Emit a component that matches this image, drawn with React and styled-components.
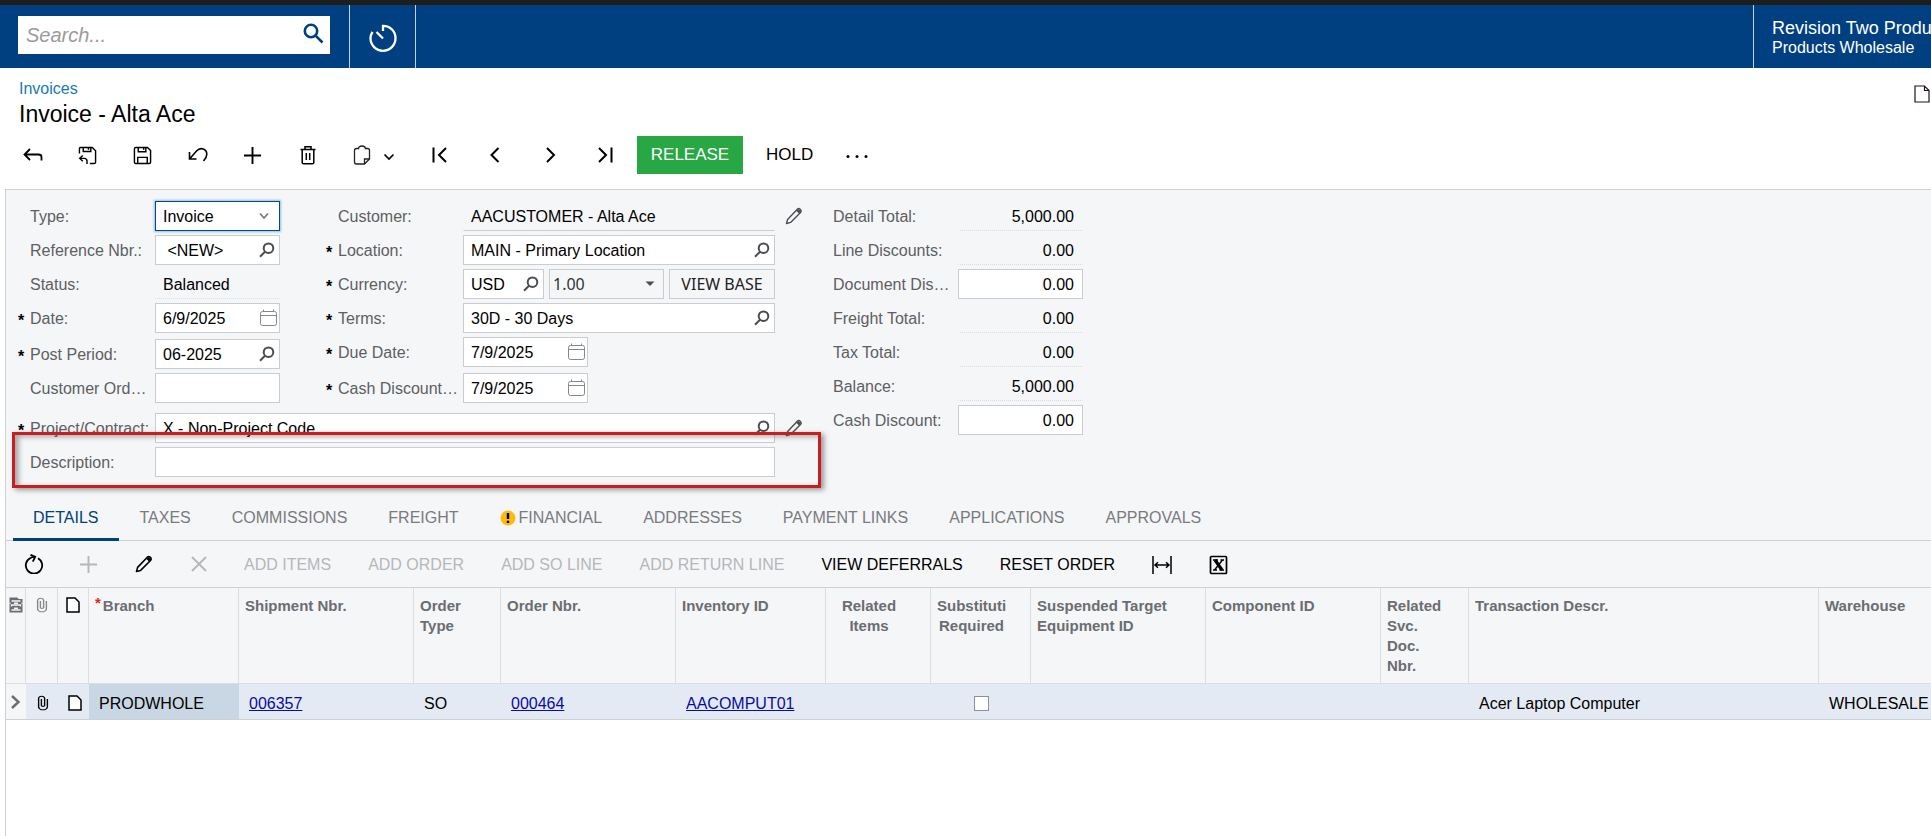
import React from "react";
import styled, { createGlobalStyle, css } from "styled-components";

const c = {
  navy: "#003f80",
  navyText: "#00427a",
  panel: "#f5f6f8",
  line: "#ced1d4",
  field: "#c9ccd0",
  label: "#5d5f62",
  muted: "#797b7e",
  disabled: "#b5b7ba",
  icon: "#4a4c50",
  row: "#e4eaf3",
  cell: "#c9d6e3",
  red: "#c81e20",
};

const Global = createGlobalStyle`
  *, *::before, *::after { box-sizing: border-box; }
  body {
    margin: 0;
    background: #fff;
    color: #000;
    font: 16px/20px "Liberation Sans", Arial, sans-serif;
    overflow-x: hidden;
  }
  button, input, select { font: inherit; color: inherit; margin: 0; }
  button { cursor: pointer; }
  svg { display: block; flex: none; }
`;

const Page = styled.div`
  display: flex;
  flex-direction: column;
  min-height: 100vh;
`;

const TopBar = styled.header`
  display: flex;
  height: 68px;
  flex: none;
  border-top: 5px solid #1e1e1e;
  background: ${c.navy};
  color: #fff;
`;

const Search = styled.form`
  display: flex;
  align-items: center;
  width: 312px;
  height: 38px;
  margin: 11px 19px 0 18px;
  background: #fff;
`;

const SearchInput = styled.input`
  flex: 1;
  min-width: 0;
  height: 38px;
  padding: 0 8px;
  border: 0;
  outline: 0;
  background: none;
  font-size: 20px;
  font-style: italic;
  color: #000;
  &::placeholder { color: #9b9b9b; opacity: 1; }
`;

const SearchButton = styled.button`
  padding: 0 6px 2px;
  border: 0;
  background: none;
`;

const TimerButton = styled.button`
  display: flex;
  align-items: center;
  justify-content: center;
  width: 67px;
  padding: 2px 0 0;
  border: solid #c4d3e2;
  border-width: 0 1px;
  background: none;
`;

const Tenant = styled.div`
  width: 178px;
  margin-left: auto;
  padding: 13px 0 0 18px;
  border-left: 1px solid #c4d3e2;
  overflow: hidden;
  white-space: nowrap;
`;

const Company = styled.div`
  font-size: 18px;
  line-height: 20px;
`;

const TitleBar = styled.div`
  display: flex;
  justify-content: space-between;
  padding: 11px 1px 0 19px;
`;

const Crumb = styled.a`
  display: block;
  color: #157ab5;
  text-decoration: none;
`;

const Title = styled.h1`
  margin: 1px 0 0;
  font-size: 23px;
  line-height: 28px;
  font-weight: 400;
`;

const PlainButton = styled.button`
  display: flex;
  align-items: center;
  justify-content: center;
  flex: none;
  padding: 0;
  border: 0;
  background: none;
`;

const NoteButton = styled(PlainButton)`
  align-self: flex-start;
  margin-top: 6px;
`;

const ActionBar = styled.div`
  display: flex;
  padding: 8px 5px 15px;
`;

const IconAction = styled(PlainButton)`
  width: ${(p) => (p.$menu ? "77px" : "55px")};
  height: 38px;
  gap: 12px;
`;

const TextAction = styled(PlainButton)`
  height: 38px;
  padding: 0 23px;
  font-size: 17px;
  ${(p) =>
    p.$primary &&
    css`
      width: 106px;
      margin-left: 5px;
      padding: 0;
      background: #28a745;
      color: #fff;
    `}
`;

const Panel = styled.main`
  display: flex;
  flex-direction: column;
  flex: 1;
  margin-left: 5px;
  border: solid ${c.line};
  border-width: 1px 0 0 1px;
`;

const Form = styled.form`
  display: flex;
  padding: 11px 12px 16px;
  background: ${c.panel};
`;

const Stack = styled.div`
  display: flex;
  flex-direction: column;
  gap: ${(p) => p.$gap || 4}px;
`;

const Pair = styled.div`
  display: flex;
  gap: 46px;
`;

const Row = styled.div`
  display: flex;
  align-items: center;
  height: 30px;
`;

const Star = styled.span`
  width: 12px;
  flex: none;
  padding-top: 6px;
  font-weight: 700;
  line-height: 20px;
`;

const Label = styled.label`
  width: 121px;
  margin-right: 4px;
  padding-top: 1px;
  flex: none;
  overflow: hidden;
  white-space: nowrap;
  text-overflow: ellipsis;
  color: ${c.label};
`;

const sizes = { small: 81, rate: 115, normal: 125, wide: 312, full: 620 };

const Box = styled.div`
  position: relative;
  display: flex;
  align-items: center;
  flex: none;
  width: ${(p) => sizes[p.$size || "normal"]}px;
  height: 30px;
  border: 1px solid ${c.field};
  background: #fff;
  ${(p) =>
    p.$look === "focus" &&
    css`
      border-color: #0b4779;
      box-shadow: 0 0 2px 1px #8fc0ee;
    `}
  ${(p) =>
    p.$look === "gray" &&
    css`
      background: ${c.panel};
    `}
  ${(p) =>
    p.$look === "line" &&
    css`
      border-color: transparent transparent ${c.field};
      background: none;
    `}
  ${(p) =>
    p.$look === "dots" &&
    css`
      border-color: transparent;
      border-bottom: 1px dotted #d9dce0;
      background: none;
    `}
`;

const Input = styled.input`
  flex: 1;
  width: 0;
  height: 28px;
  padding: 1px 8px 0 7px;
  border: 0;
  outline: 0;
  background: none;
  text-align: ${(p) => (p.$right ? "right" : "left")};
`;

const Select = styled.select`
  width: 100%;
  height: 28px;
  padding: ${(p) => (p.$rate ? "0 3px" : "1px 7px 0")};
  border: 0;
  outline: 0;
  background: none;
  appearance: none;
  ${(p) =>
    p.$rate &&
    css`
      font-family: "Noto Sans", sans-serif;
      color: #333;
    `}
`;

const SelectArrow = styled.span`
  position: absolute;
  right: ${(p) => p.$inset}px;
  pointer-events: none;
`;

const FieldButton = styled(PlainButton)`
  width: ${(p) => (p.$date ? 20 : 24)}px;
  height: 28px;
`;

const EditButton = styled(PlainButton)`
  width: 46px;
  height: 30px;
  padding-right: 8px;
`;

const CurrencyGroup = styled.div`
  display: flex;
  gap: 5px;
`;

const ViewBase = styled(PlainButton)`
  width: 106px;
  height: 30px;
  border: 1px solid ${c.field};
  font-family: "Noto Sans", sans-serif;
  color: #222;
`;

const WideBlock = styled.div`
  position: relative;
`;

const Callout = styled.div`
  position: absolute;
  inset: 19px 0 -11px -6px;
  border: 3px solid ${c.red};
  box-shadow: 3px 2px 5px rgba(60, 60, 60, 0.5), inset 4px 2px 5px rgba(60, 60, 60, 0.4);
  pointer-events: none;
`;

const Tabs = styled.nav`
  display: flex;
  gap: 1px;
  height: 48px;
  padding-left: 7px;
  border-bottom: 1px solid ${c.line};
  background: ${c.panel};
`;

const Tab = styled.button`
  display: flex;
  align-items: center;
  gap: 3px;
  height: 48px;
  padding: 4px 20px 0;
  border: 0;
  border-bottom: 3px solid ${(p) => (p.$active ? c.navyText : "transparent")};
  background: none;
  color: ${(p) => (p.$active ? c.navyText : c.muted)};
  white-space: nowrap;
`;

const GridBar = styled.div`
  display: flex;
  align-items: center;
  height: 47px;
  border-bottom: 1px solid ${c.line};
  background: ${c.panel};
`;

const GridIcon = styled(PlainButton)`
  width: 55px;
  height: 40px;
`;

const GridTexts = styled.div`
  display: flex;
  gap: 1px;
`;

const GridAction = styled(PlainButton)`
  height: 40px;
  padding: 1px 18px 0;
  white-space: nowrap;
  &:disabled { color: ${c.disabled}; }
`;

const Table = styled.table`
  width: 100%;
  table-layout: fixed;
  border-collapse: separate;
  border-spacing: 0;
`;

const Th = styled.th`
  height: 96px;
  padding: ${(p) => (p.$icon ? "9px 0 0" : "8px 24px 0 6px")};
  border: solid #dcdee1;
  border-width: 0 1px 1px 0;
  background: ${c.panel};
  color: #6b6d70;
  font-size: 15px;
  text-align: ${(p) => (p.$center ? "center" : "left")};
  vertical-align: top;
  &:last-child { border-right: 0; }
  & > svg { margin: 0 auto; }
`;

const HeadText = styled.div`
  overflow: hidden;
`;

const Required = styled.sup`
  margin-right: 2px;
  color: #d9281e;
  font-size: 15px;
  line-height: 0;
  vertical-align: 3px;
`;

const Td = styled.td`
  height: 36px;
  padding: ${(p) => (p.$center ? "3px 0 0" : p.$icon ? "3px 0 0 2px" : "4px 0 0 10px")};
  border-bottom: 1px solid ${c.line};
  background: ${(p) => (p.$plain ? c.panel : p.$selected ? c.cell : c.row)};
  white-space: nowrap;
  overflow: hidden;
  & > svg { margin: 0 auto; }
`;

const CellLink = styled.a`
  color: #0a0aa8;
  text-decoration: underline;
`;

const Check = styled.input`
  display: block;
  appearance: none;
  width: 15px;
  height: 15px;
  margin: 0 auto;
  border: 1px solid #8e9099;
  background: #fff;
`;

const Svg = ({ w = 20, h = 20, s = 2, color = "#000", px, children }) => (
  <svg
    width={px || w}
    height={px || h}
    viewBox={`0 0 ${w} ${h}`}
    fill="none"
    stroke={color}
    strokeWidth={s}
    aria-hidden="true"
  >
    {children}
  </svg>
);

const Lens = () => (
  <Svg w={16} h={16} color={c.icon}>
    <circle cx="9.5" cy="6.2" r="4.8" />
    <path d="M6 9.7L1 14.7" />
  </Svg>
);
const Calendar = () => (
  <Svg w={18} h={18} s={1} color="#85878b">
    <rect x="0.5" y="2.5" width="16" height="14" rx="2" />
    <path d="M1 6.5H16M3.5 0.5V3M13.5 0.5V3" />
  </Svg>
);
const Pencil = ({ color = c.icon, s = 1.4 }) => (
  <Svg w={18} h={18} s={s} color={color}>
    <path d="M1.5 16.5L2.6 12.4L12.3 2.2Q13.8 0.9 15.4 2.4Q16.8 3.9 15.5 5.5L5.6 15.4Z" strokeLinejoin="round" />
    <path d="M12.4 3L15 5.4" strokeWidth="3" />
  </Svg>
);
const Clip = ({ color }) => (
  <svg width="12" height="16" viewBox="6 0 13 24" preserveAspectRatio="none" fill={color} aria-hidden="true">
    <path d="M16.5 6v11.5c0 2.21-1.79 4-4 4s-4-1.79-4-4V5c0-1.38 1.12-2.5 2.5-2.5s2.5 1.12 2.5 2.5v10.5c0 .55-.45 1-1 1s-1-.45-1-1V6H10v9.5c0 1.38 1.12 2.5 2.5 2.5s2.5-1.12 2.5-2.5V5c0-2.21-1.79-4-4-4S7 2.79 7 5v12.5c0 3.04 2.46 5.5 5.5 5.5s5.5-2.46 5.5-5.5V6h-1.5z" />
  </svg>
);
const Note = () => (
  <Svg w={14} h={16} s={1.5}>
    <path d="M1 1H9L13 5V15H1Z" fill="#fff" />
  </Svg>
);

const Lookup = ({ label }) => (
  <FieldButton type="button" aria-label={label}>
    <Lens />
  </FieldButton>
);

function Field({ id, label, required, value = "", size, look, icon, right, edit, readOnly }) {
  return (
    <Row>
      <Star>{required ? "*" : ""}</Star>
      <Label htmlFor={id}>{label}</Label>
      <Box $size={size} $look={look}>
        <Input id={id} defaultValue={value} $right={right} readOnly={readOnly} />
        {icon === "lens" && <Lookup label={`Select ${id}`} />}
        {icon === "date" && (
          <FieldButton type="button" $date aria-label={`Pick ${id}`}>
            <Calendar />
          </FieldButton>
        )}
      </Box>
      {edit && (
        <EditButton type="button" aria-label={`Edit ${id}`}>
          <Pencil />
        </EditButton>
      )}
    </Row>
  );
}

const totals = [
  ["detailTotal", "Detail Total:", "5,000.00"],
  ["lineDiscounts", "Line Discounts:", "0.00"],
  ["documentDiscounts", "Document Discounts:", "0.00", true],
  ["freightTotal", "Freight Total:", "0.00"],
  ["taxTotal", "Tax Total:", "0.00"],
  ["balance", "Balance:", "5,000.00"],
  ["cashDiscount", "Cash Discount:", "0.00", true],
];

const actions = [
  ["Back", <Svg s={1.8}><path d="M7 4L1.5 9.5L7 15M1.5 9.5H15.5Q18.5 9.5 18.5 12V15.5" /></Svg>],
  [
    "Save and close",
    <Svg s={1.5} px={19}>
      <path d="M1.5 8V2.5Q1.5 1.5 2.5 1.5H15L18.5 5V17Q18.5 18.5 17 18.5H12.5" />
      <path d="M5.5 2V5.8H13.5V2M11 2V4" />
      <path d="M5 10L1.8 13L5 16M2 13H6.5Q9.5 13 9.5 16V19" />
    </Svg>,
  ],
  [
    "Save",
    <Svg s={1.5} px={19}>
      <path d="M3 1.5H15.2L18.5 4.8V17Q18.5 18.5 17 18.5H3Q1.5 18.5 1.5 17V3Q1.5 1.5 3 1.5Z" />
      <path d="M5.5 2V6H13.5V2M11.2 2V4M5 18V12H15V18" />
    </Svg>,
  ],
  [
    "Undo",
    <Svg s={1.6}>
      <path d="M1.5 7V14H8.5M1.8 13.7L8.5 6Q11.5 2.7 15.3 4Q18.8 5.5 18.8 9.2Q18.8 12.5 15.5 16" />
    </Svg>,
  ],
  ["Add", <Svg px={19}><path d="M10 1V19M1 10H19" /></Svg>],
  [
    "Delete",
    <Svg s={1.5}>
      <path d="M2.5 4.5H17.5M7 4V1.8H13V4M4.2 4.5V17.5Q4.2 18.8 5.5 18.8H14.5Q15.8 18.8 15.8 17.5V4.5M8.3 8V15M11.7 8V15" />
    </Svg>,
  ],
  [
    "Clipboard",
    <>
      <Svg w={18} s={1.3} color="#222">
        <path d="M5.5 3.5H3.5Q1.5 3.5 1.5 5.5V17Q1.5 19 3.5 19H11.5L16.5 14V5.5Q16.5 3.5 14.5 3.5H12.5" />
        <path d="M5.5 4.2Q5.5 1 9 1Q12.5 1 12.5 4.2M11.5 19V14H16.5" />
      </Svg>
      <Svg w={12} h={12} s={1.7}><path d="M1.5 5.5L6 10L10.5 5.5" /></Svg>
    </>,
  ],
  ["First", <Svg><path d="M3.5 2.5V17.5M16 3L9 10L16 17" /></Svg>],
  ["Previous", <Svg><path d="M13.5 3L6.5 10L13.5 17" /></Svg>],
  ["Next", <Svg><path d="M7 3L14 10L7 17" /></Svg>],
  ["Last", <Svg><path d="M4 3L11 10L4 17M16.5 2.5V17.5" /></Svg>],
];

const tabs = [
  "DETAILS",
  "TAXES",
  "COMMISSIONS",
  "FREIGHT",
  "FINANCIAL",
  "ADDRESSES",
  "PAYMENT LINKS",
  "APPLICATIONS",
  "APPROVALS",
];

const gridIcons = [
  [
    "Refresh",
    <Svg s={1.8}>
      <path d="M14 4.2A8.2 8.2 0 1 1 6 4.2Q7.5 3 11 2.9" />
      <path d="M6.5 0.8L11.2 2.8L8.8 7.6" />
    </Svg>,
  ],
  ["Add row", <Svg color="#b4b6b9" px={19}><path d="M10 1V19M1 10H19" /></Svg>, true],
  ["Edit row", <Pencil color="#000" s={1.6} />],
  ["Delete row", <Svg color="#b4b6b9" s={1.8}><path d="M3 3L17 17M17 3L3 17" /></Svg>, true],
];

const gridActions = [
  ["ADD ITEMS", true],
  ["ADD ORDER", true],
  ["ADD SO LINE", true],
  ["ADD RETURN LINE", true],
  ["VIEW DEFERRALS", false],
  ["RESET ORDER", false],
];

const columns = [
  { w: 20 },
  { w: 32 },
  { w: 31 },
  { w: 150, text: "Branch", required: true },
  { w: 175, text: "Shipment Nbr." },
  { w: 87, text: "Order Type" },
  { w: 175, text: "Order Nbr." },
  { w: 150, text: "Inventory ID" },
  { w: 105, text: "Related Items", center: true },
  { w: 100, text: "Substitution Required", center: true },
  { w: 175, text: "Suspended Target Equipment ID" },
  { w: 175, text: "Component ID" },
  { w: 88, text: "Related Svc. Doc. Nbr." },
  { w: 350, text: "Transaction Descr." },
  { text: "Warehouse" },
];

const headIcons = [
  <Svg w={14} h={16} s={1.4} color={c.panel}>
    <path d="M0.5 0.5H8.5L9.5 2H13.5V15.5H0.5Z" fill="#6b6d70" stroke="none" />
    <path d="M2.5 4H11.5M2.5 9.5V8H11.5V9.5M2.5 13H11.5M0.5 6.3H1.5M12.5 6.3H13.5M5 6.3H9M5 11.3H9" />
  </Svg>,
  <Clip color="#85878a" />,
  <Note />,
];

export default function App() {
  return (
    <Page>
      <Global />
      <TopBar>
        <Search onSubmit={(e) => e.preventDefault()}>
          <SearchInput placeholder="Search..." aria-label="Search" />
          <SearchButton aria-label="Run search">
            <Svg w={22} h={22} s={2.6} color={c.navy}>
              <circle cx="9" cy="8" r="6.2" />
              <path d="M13.3 12.3L20.5 19.5" />
            </Svg>
          </SearchButton>
        </Search>
        <TimerButton aria-label="Recent">
          <Svg w={28} h={28} s={2.3} color="#fff">
            <path d="M14 7V1.8C21.5 1.8 26.5 7.5 26.5 14.3A12.5 12.5 0 0 1 1.5 14.3Q1.5 11 3.5 8M7.5 8L14 14.5" />
          </Svg>
        </TimerButton>
        <Tenant>
          <Company>Revision Two Products</Company>
          <div>Products Wholesale</div>
        </Tenant>
      </TopBar>

      <TitleBar>
        <div>
          <Crumb href="#invoices">Invoices</Crumb>
          <Title>Invoice - Alta Ace</Title>
        </div>
        <NoteButton aria-label="Notes">
          <Svg w={16} h={18} s={1.2} color="#1f0f2b">
            <path d="M1 1H10.5L15 5.5V17H1ZM10.5 1V5.5H15" />
          </Svg>
        </NoteButton>
      </TitleBar>

      <ActionBar>
        {actions.map(([name, icon]) => (
          <IconAction key={name} aria-label={name} $menu={name === "Clipboard"}>
            {icon}
          </IconAction>
        ))}
        <TextAction $primary>RELEASE</TextAction>
        <TextAction>HOLD</TextAction>
        <PlainButton aria-label="More">
          <Svg w={42} color="none">
            <g fill="#000">
              <circle cx="12" cy="11.5" r="1.5" />
              <circle cx="21" cy="11.5" r="1.5" />
              <circle cx="30" cy="11.5" r="1.5" />
            </g>
          </Svg>
        </PlainButton>
      </ActionBar>

      <Panel>
        <Form onSubmit={(e) => e.preventDefault()}>
          <Stack $gap={10}>
            <Pair>
              <Stack $gap={6}>
                <Stack>
                  <Row>
                    <Star />
                    <Label htmlFor="type">Type:</Label>
                    <Box $look="focus">
                      <Select id="type" defaultValue="Invoice">
                        <option>Invoice</option>
                      </Select>
                      <SelectArrow $inset={9}>
                        <Svg w={12} h={10} s={1.7} color="#77797d"><path d="M2 2.5L6 7L10 2.5" /></Svg>
                      </SelectArrow>
                    </Box>
                  </Row>
                  <Field id="reference" label="Reference Nbr.:" value=" <NEW>" icon="lens" />
                  <Field id="status" label="Status:" value="Balanced" look="dots" readOnly />
                  <Field id="date" label="Date:" required value="6/9/2025" icon="date" />
                </Stack>
                <Stack>
                  <Field id="period" label="Post Period:" required value="06-2025" icon="lens" />
                  <Field id="order" label="Customer Order Nbr.:" />
                </Stack>
              </Stack>
              <Stack $gap={6}>
                <Stack>
                  <Field
                    id="customer"
                    label="Customer:"
                    value="AACUSTOMER - Alta Ace"
                    size="wide"
                    look="line"
                    readOnly
                    edit
                  />
                  <Field id="location" label="Location:" required value="MAIN - Primary Location" size="wide" icon="lens" />
                  <Row>
                    <Star>*</Star>
                    <Label htmlFor="currency">Currency:</Label>
                    <CurrencyGroup>
                      <Box $size="small">
                        <Input id="currency" defaultValue="USD" />
                        <Lookup label="Select currency" />
                      </Box>
                      <Box $size="rate" $look="gray">
                        <Select aria-label="Rate" $rate defaultValue="1.00">
                          <option>1.00</option>
                        </Select>
                        <SelectArrow $inset={8}>
                          <Svg w={10} h={6} color="none"><path d="M0.5 0.5H9.5L5 5Z" fill={c.icon} /></Svg>
                        </SelectArrow>
                      </Box>
                      <ViewBase type="button">VIEW BASE</ViewBase>
                    </CurrencyGroup>
                  </Row>
                  <Field id="terms" label="Terms:" required value="30D - 30 Days" size="wide" icon="lens" />
                  <Field id="due" label="Due Date:" required value="7/9/2025" icon="date" />
                </Stack>
                <Field id="cashdate" label="Cash Discount Date:" required value="7/9/2025" icon="date" />
              </Stack>
            </Pair>
            <WideBlock>
              <Stack>
                <Field
                  id="project"
                  label="Project/Contract:"
                  required
                  value="X - Non-Project Code"
                  size="full"
                  icon="lens"
                  edit
                />
                <Field id="description" label="Description:" size="full" />
              </Stack>
              <Callout />
            </WideBlock>
          </Stack>
          <Stack>
            {totals.map(([id, label, value, editable]) => (
              <Field
                key={id}
                id={id}
                label={label}
                value={value}
                look={editable ? undefined : "dots"}
                readOnly={!editable}
                right
              />
            ))}
          </Stack>
        </Form>

        <Tabs>
          {tabs.map((t, i) => (
            <Tab key={t} $active={i === 0}>
              {t === "FINANCIAL" && (
                <Svg w={16} h={16} s={2.4}>
                  <circle cx="8" cy="8" r="7.5" fill="#fdbb12" stroke="none" />
                  <path d="M8 3V9M8 10.8V13" />
                </Svg>
              )}
              {t}
            </Tab>
          ))}
        </Tabs>

        <GridBar>
          {gridIcons.map(([name, icon, off]) => (
            <GridIcon key={name} aria-label={name} disabled={off}>
              {icon}
            </GridIcon>
          ))}
          <GridTexts>
            {gridActions.map(([name, off]) => (
              <GridAction key={name} disabled={off}>{name}</GridAction>
            ))}
            <GridAction aria-label="Fit columns">
              <Svg s={1.5}>
                <path d="M1 1V19M19 1V19M3 10H17M6 7.2L3 10L6 12.8M14 7.2L17 10L14 12.8" />
              </Svg>
            </GridAction>
            <GridAction aria-label="Export to Excel">
              <Svg s={1.7}>
                <rect x="1.5" y="1.5" width="16" height="17" rx="1" />
                <path d="M6 5L13 15" strokeWidth="3.2" />
                <path d="M13.5 5L5.5 15M4 5H9M11.5 5H15M4 15H8M10.5 15H15" strokeWidth="1.4" />
              </Svg>
            </GridAction>
          </GridTexts>
        </GridBar>

        <Table>
          <colgroup>
            {columns.map((col, i) => (
              <col key={i} width={col.w} />
            ))}
          </colgroup>
          <thead>
            <tr>
              {columns.map((col, i) => (
                <Th key={i} $icon={i < 3} $center={col.center} scope="col">
                  {i < 3 ? (
                    headIcons[i]
                  ) : (
                    <HeadText>
                      {col.required && <Required>*</Required>}
                      {col.text}
                    </HeadText>
                  )}
                </Th>
              ))}
            </tr>
          </thead>
          <tbody>
            <tr>
              <Td $center $plain>
                <Svg w={12} h={16} s={2.4} color="#6b6d70"><path d="M2 1L8.5 7L2 13" /></Svg>
              </Td>
              <Td $icon><Clip color="#000" /></Td>
              <Td $icon><Note /></Td>
              <Td $selected>PRODWHOLE</Td>
              <Td><CellLink href="#006357">006357</CellLink></Td>
              <Td>SO</Td>
              <Td><CellLink href="#000464">000464</CellLink></Td>
              <Td><CellLink href="#AACOMPUT01">AACOMPUT01</CellLink></Td>
              <Td />
              <Td $center><Check type="checkbox" aria-label="Substitution required" /></Td>
              <Td />
              <Td />
              <Td />
              <Td>Acer Laptop Computer</Td>
              <Td>WHOLESALE</Td>
            </tr>
          </tbody>
        </Table>
      </Panel>
    </Page>
  );
}
